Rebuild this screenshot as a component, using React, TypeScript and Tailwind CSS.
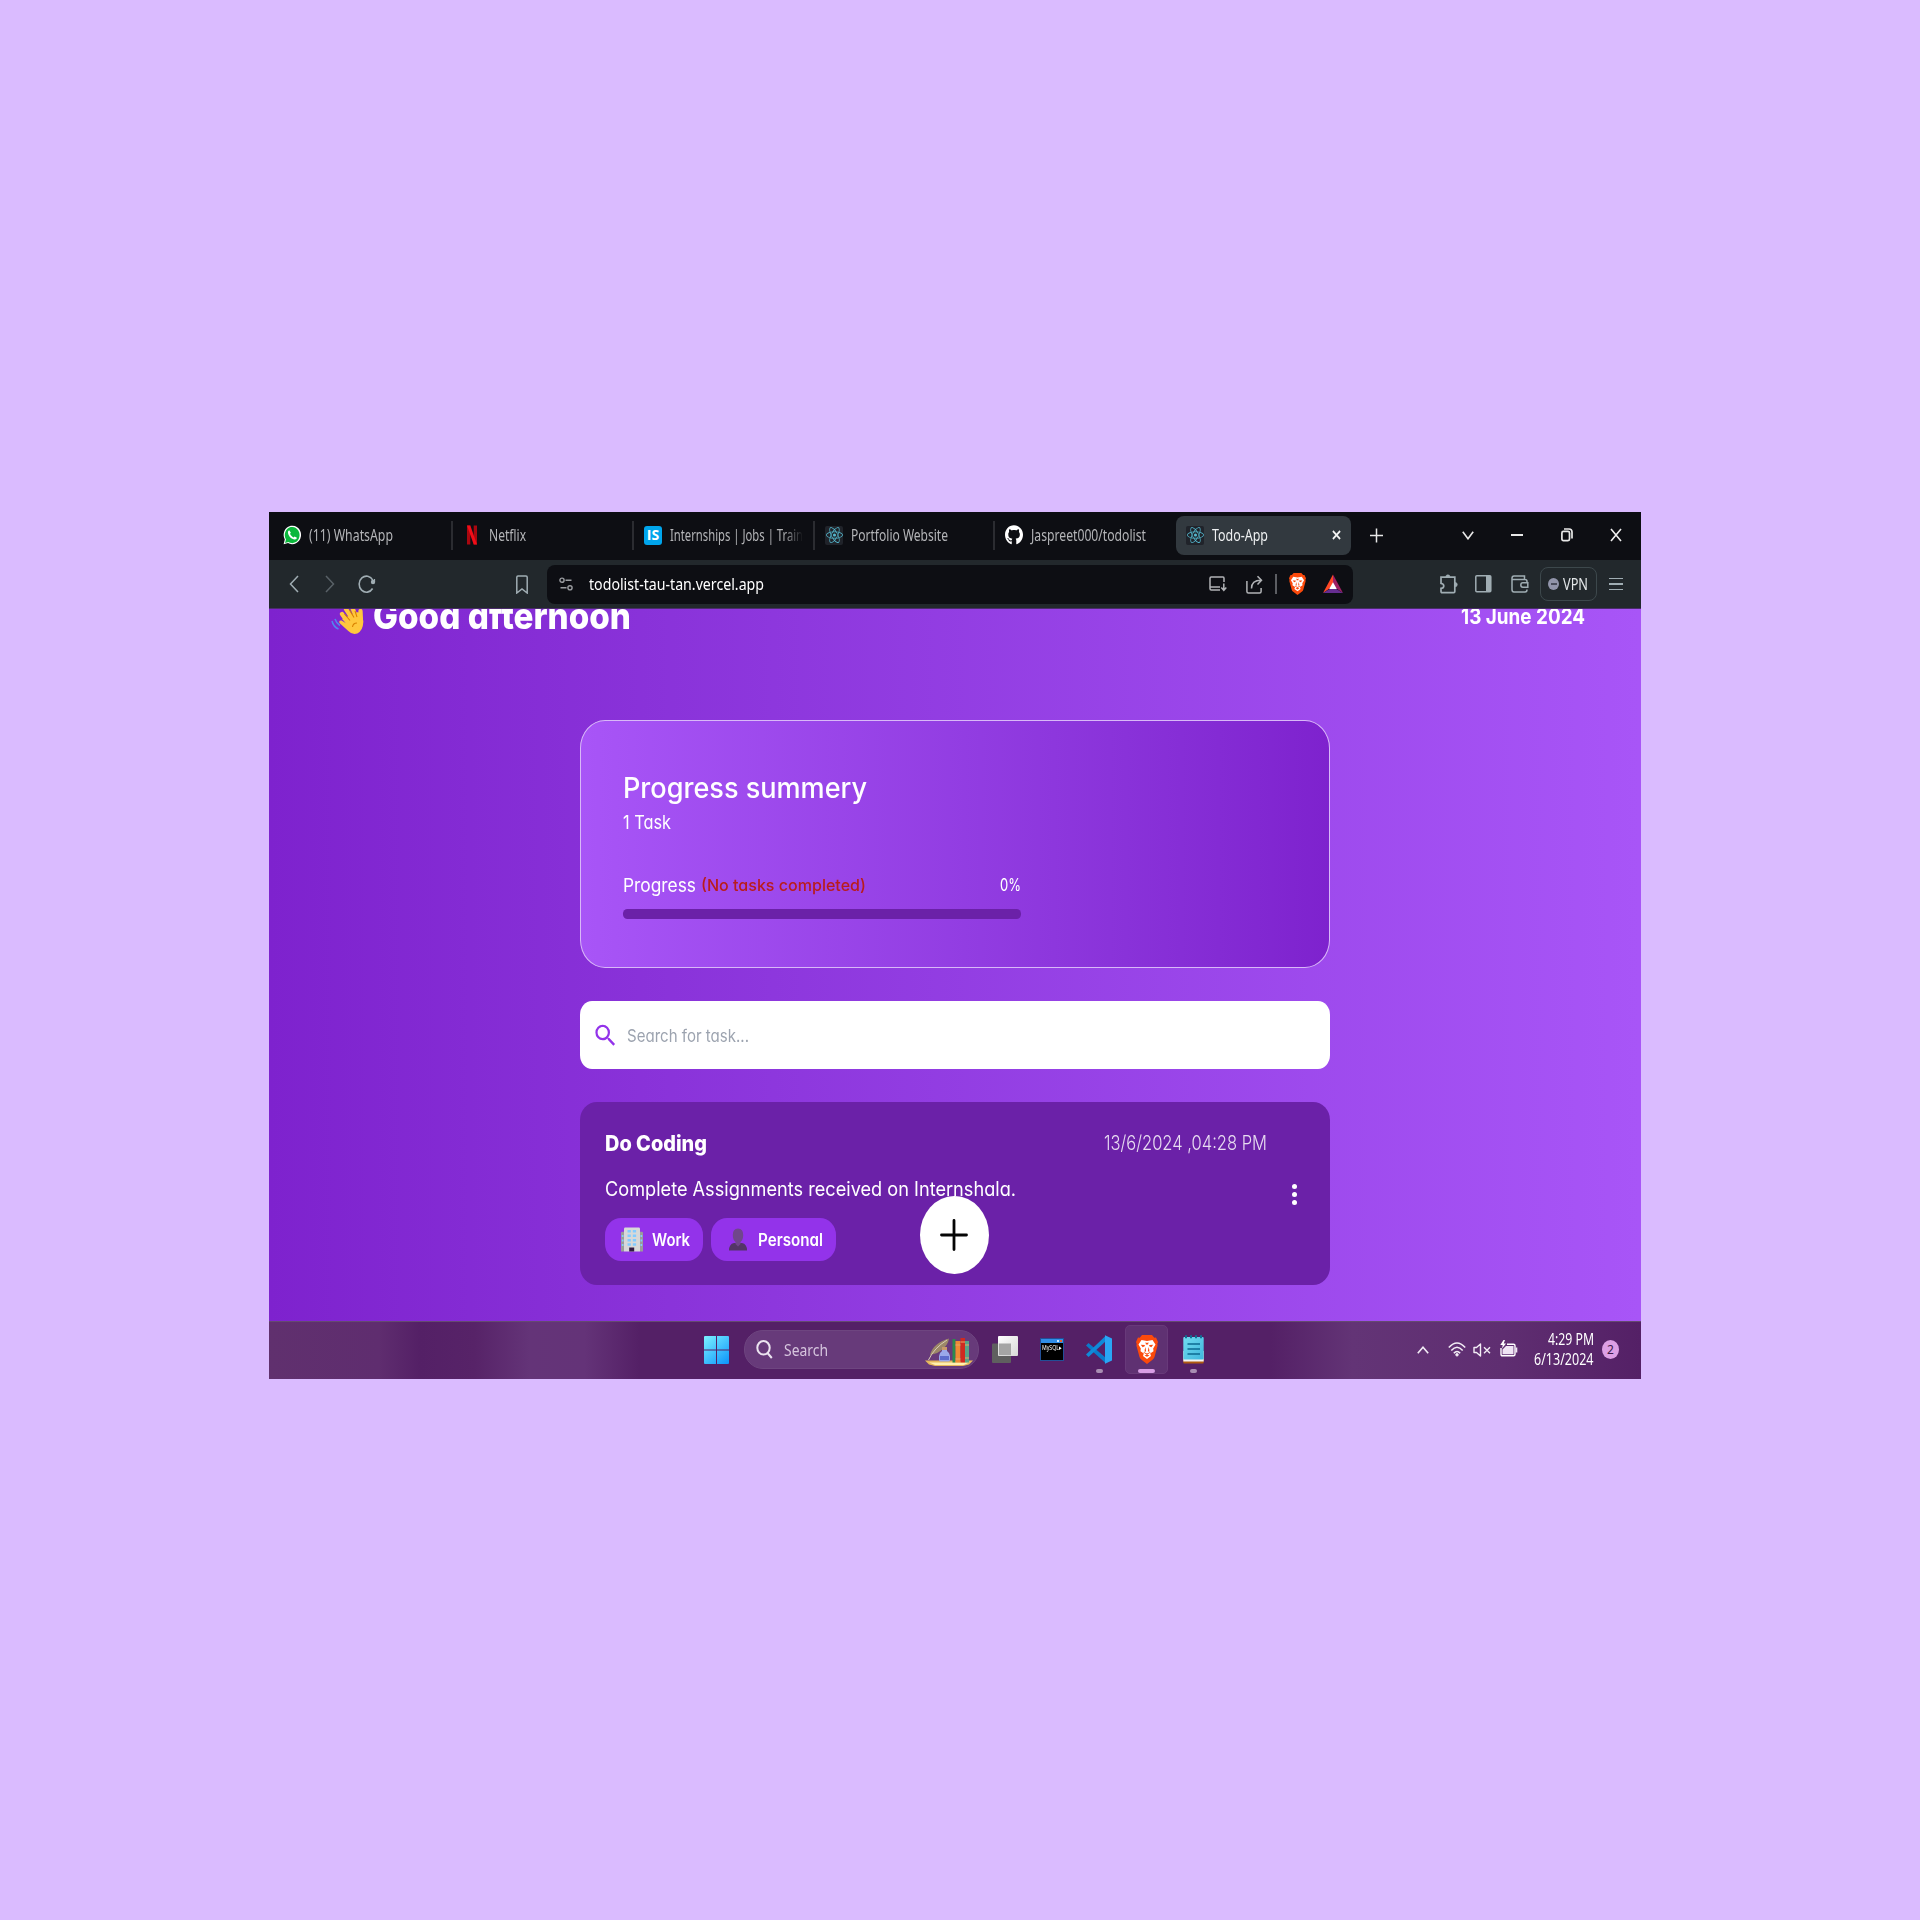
import { useLayoutEffect, useRef, type ReactNode } from "react";
import { FaReact, FaGithub } from "react-icons/fa";
import { MdSearch } from "react-icons/md";

/* Single-line label whose glyphs are condensed or widened to fill its box. */
function Label({ className, children }: { className: string; children: ReactNode }) {
  const box = useRef<HTMLDivElement>(null);
  const text = useRef<HTMLSpanElement>(null);
  useLayoutEffect(() => {
    const b = box.current;
    const t = text.current;
    if (!b || !t) return;
    t.style.transform = "none";
    const natural = t.getBoundingClientRect().width;
    const target = b.getBoundingClientRect().width;
    if (natural > 0) t.style.transform = `scaleX(${target / natural})`;
  });
  return (
    <div ref={box} className={"shrink-0 whitespace-nowrap " + className}>
      <span ref={text} className="inline-block origin-left">
        {children}
      </span>
    </div>
  );
}

function ReactBadge() {
  return (
    <div className="flex h-[19px] w-[18px] items-center justify-center rounded-[2px] bg-[#20232a]">
      <FaReact className="h-[18px] w-[17px] text-[#53b6cc]" preserveAspectRatio="none" />
    </div>
  );
}

function WhatsAppIcon() {
  return (
    <svg viewBox="0 0 18 20" className="h-[20px] w-[18px]">
      <path d="M.6 19.3 1.800 14.6A8.700 9.3 0 1 1 5 18z" fill="#fff" />
      <path d="M2 18 3 14.5A7.400 8.1 0 1 1 5.4 17z" fill="#0bb83c" />
      <path
        d="M6.2 5.3c-.9.4-1.4 1.4-1.2 2.6.5 3.2 3.6 6.300 6.700 6.500 1.200.1 2-.6 2.200-1.700l-2.300-1.300-1 1.100C9 11.800 7.500 10.200 7 8.800l.9-1.100z"
        fill="#fff"
      />
    </svg>
  );
}

function NetflixIcon() {
  return (
    <svg viewBox="0 0 18 20" className="h-[20px] w-[18px]">
      <path d="M4 .5h3.300v19H4zM10.700.5H14v19h-3.300z" fill="#a9070f" />
      <path d="M4 .5h3.300L14 19.500h-3.300z" fill="#f20d18" />
    </svg>
  );
}

function BraveIcon({ className }: { className: string }) {
  return (
    <svg viewBox="0 0 22 29" preserveAspectRatio="none" className={"shrink-0 " + className}>
      <path
        d="M6 0h10l2.300 2.700 1.700-.2 2 4.500-.7 2 .3 1.500-3.100 11.500q-.6 1.800-2 2.800L11 29l-5.500-4.200q-1.400-1-2-2.800L.4 10.500.7 9 0 7l2-4.500 1.700.2z"
        fill="#fb4a0c"
      />
      <path
        d="M5.500 5 11 6l5.500-1 3 4.500-2.300 4 .3 2.700-3.300 2.300.8 2.500L11 24l-4-3 .8-2.500-3.300-2.300.3-2.700-2.300-4z"
        fill="#fff"
      />
      <path
        d="m4.800 9.800 3.700.2.500 1-2.300 1.200zM17.200 9.800l-3.700.2-.5 1 2.300 1.200zM9.500 7.200 11 8l1.500-.8-.4 2.300H9.900zM9.500 12l.6 4.200-2 1 2.900 1.300 2.900-1.300-2-1 .6-4.200.9 3-.3 1.500 1.500.9L11 19.800l-3.600-2.400 1.500-.9-.3-1.500zM8.500 20.500 11 19.500l2.500 1-2.500 1.300z"
        fill="#fb4a0c"
      />
    </svg>
  );
}

function Tab({ tab, icon, sep = true, children }: { tab: string; icon: ReactNode; sep?: boolean; children: ReactNode }) {
  return (
    <div className={"flex h-full shrink-0 items-center overflow-hidden " + tab}>
      {sep && <div className="mr-[10.5px] h-[29px] w-[1.5px] shrink-0 bg-[#2b2c31]" />}
      <div className="shrink-0">{icon}</div>
      {children}
    </div>
  );
}

function TabStrip() {
  return (
    <div className="flex h-[48px] items-center bg-[#0d0e13] pb-[2px] font-['Noto_Sans'] text-[15.5px] leading-[20px] text-[#b4b5b8]">
      <Tab tab="w-[182px] pl-[14px]" sep={false} icon={<WhatsAppIcon />}>
        <Label className="ml-[8px] w-[84px]">(11) WhatsApp</Label>
      </Tab>
      <Tab tab="w-[181px]" icon={<NetflixIcon />}>
        <Label className="ml-[8px] w-[37px]">Netflix</Label>
      </Tab>
      <Tab
        tab="w-[181px]"
        icon={
          <div className="flex h-[19px] w-[18px] items-center justify-center rounded-[3px] bg-[#00a5ec] font-['Open_Sans'] text-[14px] leading-none font-bold text-white">
            IS
          </div>
        }
      >
        <div className="ml-[8px] w-[133px] overflow-hidden [mask-image:linear-gradient(to_right,black_85%,transparent)]">
          <Label className="w-[136px]">Internships | Jobs | Traini</Label>
        </div>
      </Tab>
      <Tab tab="w-[180px]" icon={<ReactBadge />}>
        <Label className="ml-[8px] w-[97px]">Portfolio Website</Label>
      </Tab>
      <Tab tab="w-[183px]" icon={<FaGithub className="h-[20px] w-[18px] text-white" preserveAspectRatio="none" />}>
        <Label className="ml-[8px] w-[115px]">Jaspreet000/todolist</Label>
      </Tab>
      <div className="flex h-[39px] w-[175px] shrink-0 items-center rounded-[8px] bg-[#32393f] pl-[10px] text-[#eef0f1]">
        <ReactBadge />
        <Label className="ml-[8px] w-[56px]">Todo-App</Label>
        <svg viewBox="0 0 10 10" className="ml-[64px] h-[10px] w-[9px]" preserveAspectRatio="none">
          <path d="M1 1 9 9M9 1 1 9" stroke="#f4f4f4" strokeWidth="1.800" />
        </svg>
      </div>
      <svg viewBox="0 0 13 15" className="ml-[18.500px] h-[15px] w-[13px] shrink-0">
        <path d="M6.500.5v14M0 7.500h13" stroke="#e8e8e8" strokeWidth="1.500" />
      </svg>
      <svg viewBox="0 0 12 9" className="ml-[79.500px] h-[9px] w-[12px] shrink-0">
        <path d="M.8.8 6 7.800 11.200.8" fill="none" stroke="#e8e8e8" strokeWidth="1.600" />
      </svg>
      <div className="ml-[37px] h-[2px] w-[12px] shrink-0 bg-[#e8e8e8]" />
      <svg viewBox="0 0 12 14" className="ml-[37.500px] h-[14px] w-[12px] shrink-0" fill="none" stroke="#e8e8e8" strokeWidth="1.700">
        <rect x=".9" y="3.400" width="7.600" height="9.200" rx="1.500" />
        <path d="M3 1h5a3 3 0 0 1 3 3v6.500" />
      </svg>
      <svg viewBox="0 0 12 14" className="ml-[37.500px] h-[14px] w-[12px] shrink-0">
        <path d="M1 1 11 13M11 1 1 13" stroke="#f0f0f0" strokeWidth="1.600" />
      </svg>
    </div>
  );
}

function Toolbar() {
  return (
    <div className="flex h-[49px] items-center border-b border-[#4b2c6b] bg-[#22282c] font-['Noto_Sans'] text-[#a0adb3]">
      <svg viewBox="0 0 10 18" className="ml-[20px] h-[18px] w-[10px]" fill="none" stroke="#a0adb3" strokeWidth="1.500">
        <path d="M9 1 1.500 9 9 17" />
      </svg>
      <svg viewBox="0 0 10 18" className="ml-[26px] h-[18px] w-[10px]" fill="none" stroke="#596167" strokeWidth="1.500">
        <path d="M1 1 8.500 9 1 17" />
      </svg>
      <svg viewBox="0 0 18 20" className="ml-[23px] h-[20px] w-[18px]">
        <path d="M14.600 14.500A7.300 8 0 1 1 14.800 6.200" fill="none" stroke="#a0adb3" strokeWidth="1.600" />
        <circle cx="15" cy="8" r="2.200" fill="#a0adb3" />
        <path d="M16.500 5v3" stroke="#a0adb3" strokeWidth="1.200" />
      </svg>
      <svg viewBox="0 0 12 19" className="ml-[140px] h-[19px] w-[12px]" fill="none" stroke="#a0adb3" strokeWidth="1.500">
        <path d="M.8 2.200Q.8 1 2 1h8q1.200 0 1.200 1.200V18L6 14 .8 18z" />
      </svg>
      <div className="ml-[19px] flex h-[39px] w-[806px] shrink-0 items-center rounded-[8px] bg-[#0d0e13]">
        <svg viewBox="0 0 14 14" className="ml-[12px] h-[14px] w-[14px]" fill="none" stroke="#9b9da1" strokeWidth="1.400">
          <circle cx="3" cy="3.200" r="2.100" />
          <circle cx="11" cy="10.800" r="2.100" />
          <path d="M6.500 3.200h6M1.500 10.800h6" />
        </svg>
        <Label className="ml-[16px] w-[175px] text-[16.5px] leading-[22px] text-white">todolist-tau-tan.vercel.app</Label>
        <svg viewBox="0 0 18 16" className="ml-[445px] h-[16px] w-[18px]" fill="none" stroke="#b1b3b6" strokeWidth="1.500">
          <path d="M15 6V2.200Q15 1 14 1H2.200Q1 1 1 2.200v10.600Q1 14 2.200 14H11M1 11h10" />
          <path d="M14.800 7.500v6.500M12.300 11.500l2.500 2.800 2.500-2.800" />
        </svg>
        <svg viewBox="0 0 17 19" className="ml-[19px] h-[19px] w-[17px]" fill="none" stroke="#b1b3b6" strokeWidth="1.500">
          <path d="M.9 6v10.500Q.9 18 2.400 18h11.200q1.500 0 1.500-1.500V13" />
          <path d="M5.500 13.500C5.500 8 8.500 5.300 15 5.300M11.500 1.200l4 4.100-4 4.200" />
        </svg>
        <div className="ml-[12px] h-[20px] w-[1.5px] bg-[#5c5e63]" />
        <BraveIcon className="ml-[12px] h-[22px] w-[17px]" />
        <svg viewBox="0 0 20 20" className="ml-[17.5px] h-[20px] w-[20px]">
          <path d="M10 .5 0 19l10-7z" fill="#ff4724" />
          <path d="M10 .5 20 19l-10-7z" fill="#9e1f63" />
          <path d="M0 19h20l-10-6z" fill="#662d91" />
          <path d="M10 8.300 6.200 15h7.600z" fill="#fff" />
        </svg>
      </div>
      <svg viewBox="0 0 18 20" className="ml-[87px] h-[20px] w-[18px]" fill="none" stroke="#a0adb3" strokeWidth="1.700">
        <path d="M1 3.200h13.800v14.400q0 1-1 1H2q-1 0-1-1v-3.300q2.800 0 2.800-2.300T1 9.300z" />
        <path d="M5.800 3Q5.800.8 7.900.8T10 3zM15 8.400q2.300 0 2.300 2.200T15 12.800z" fill="#a0adb3" strokeWidth="0.600" />
      </svg>
      <svg viewBox="0 0 17 18" className="ml-[17px] h-[18px] w-[17px]">
        <rect x=".8" y=".8" width="15" height="16" rx="1" fill="none" stroke="#a0adb3" strokeWidth="1.500" />
        <path d="M11 1h5v16h-5z" fill="#a0adb3" />
      </svg>
      <svg viewBox="0 0 18 18" className="ml-[18.500px] h-[18px] w-[18px]" fill="none" stroke="#a0adb3" strokeWidth="1.500">
        <path d="M1 3v11.500Q1 17 3 17h11q2 0 2-2.500M1 3.300Q1 1 3 1h10.500v3.500M1 4.500h13q2 0 2 2V8" />
        <path d="M16.800 7.800h-5q-2 0-2 2.200t2 2.200h5z" />
      </svg>
      <div className="ml-[11.500px] flex h-[34px] w-[57px] shrink-0 items-center rounded-[8px] border border-[#3d484c]">
        <div className="ml-[7px] flex h-[12px] w-[11px] items-center justify-center rounded-[50%] bg-[#9295ab]">
          <div className="h-[1.5px] w-[6px] bg-[#4a4d5c]" />
        </div>
        <Label className="ml-[4px] w-[25px] text-[15.5px] leading-[20px] text-[#e3e6e8]">VPN</Label>
      </div>
      <div className="ml-[12px] flex w-[14px] flex-col gap-[4px]">
        <div className="h-[1.5px] bg-[#a0adb3]" />
        <div className="h-[1.5px] bg-[#a0adb3]" />
        <div className="h-[1.5px] bg-[#a0adb3]" />
      </div>
    </div>
  );
}

function WaveHand() {
  return (
    <svg viewBox="0 0 34 36" className="h-[36px] w-[34px]">
      <path d="M1 22q1.500 6 6.500 8M4 20q1.500 4.500 5 6.500" stroke="#5087f0" strokeWidth="1.500" fill="none" />
      <g stroke="#ffc83d" strokeWidth="4.300" strokeLinecap="round">
        <path d="m11 15 7 10M15 10l7 11M21 8l5 12M29.500 12l.5 11" />
      </g>
      <path d="M11 20 27 13q5 3 5.300 10-.3 8.500-6 11.500-5.300 1.500-9-2.500L8.500 24q-1-3 2-2.500l5 3z" fill="#ffc83d" />
      <path d="m13.500 15 5.500 6.500M18.500 11l4.500 7.500M24 12l2 6M26 24q-4 0-4.500 4" stroke="#d98200" strokeWidth="1.100" fill="none" />
    </svg>
  );
}

function ProgressCard() {
  return (
    <div className="h-[248px] w-[750px] rounded-[25px/28px] border border-[#d9b8f8] bg-linear-to-r from-[#a855f7] to-[#7e22ce] pl-[42.5px] text-white">
      <Label className="mt-[48px] w-[244px] text-[28px] leading-[38px] font-medium">Progress summery</Label>
      <Label className="mt-[2px] w-[48px] text-[19px] leading-[28px]">1 Task</Label>
      <div className="mt-[35px] flex w-[398px] items-center">
        <Label className="w-[73px] text-[18.5px] leading-[26px]">Progress</Label>
        <Label className="ml-[5px] w-[165px] text-[16.5px] leading-[26px] font-medium text-[#b91c1c]">(No tasks completed)</Label>
        <Label className="ml-auto w-[21px] text-[17px] leading-[26px]">0%</Label>
      </div>
      <div className="mt-[11px] h-[10px] w-[398px] rounded-[4.5px] bg-[#6b21a8]" />
    </div>
  );
}

function SearchBar() {
  return (
    <div className="mt-[33px] flex h-[68px] w-[750px] items-center rounded-[12px/14px] bg-white">
      <MdSearch className="ml-[12.5px] h-[29px] w-[27px] text-[#9333ea]" preserveAspectRatio="none" />
      <Label className="mt-[2px] ml-[7.5px] w-[122px] text-[17px] leading-[24px] text-[#9ca3af]">Search for task...</Label>
    </div>
  );
}

function OfficeIcon() {
  return (
    <svg viewBox="0 0 22 25" className="h-[25px] w-[22px]">
      <path d="M0 6q0-1.200 1.200-1.200H3V24.500H0zM22 6q0-1.200-1.200-1.200H19V24.500h3z" fill="#9b9b9b" />
      <path d="M3 1.700Q3 .5 4.200.5h13.600Q19 .5 19 1.700v22.800H3z" fill="#d8d8d8" />
      <path
        d="M6.500 3h3.300v2.500H6.500zM11.800 3h3.300v2.500h-3.300zM6.500 7.500h3.300V10H6.500zM11.800 7.500h3.300V10h-3.300zM6.500 12h3.300v2.500H6.500zM11.800 12h3.300v2.500h-3.300zM6.500 16.300h3.300v2.500H6.500zM11.800 16.300h3.300v2.500h-3.300zM.8 8h1.700v2H.8zM.8 12.500h1.700v2H.8zM.8 17h1.700v2H.8zM19.500 8h1.700v2h-1.700zM19.500 12.500h1.700v2h-1.700zM19.500 17h1.700v2h-1.700z"
        fill="#83cbff"
      />
      <path d="M8.200 20.500h5v4h-5z" fill="#321b41" />
    </svg>
  );
}

function PersonIcon() {
  return (
    <svg viewBox="0 0 18 23" className="h-[23px] w-[18px]">
      <path d="M0 22.500Q0 16 5 15h8q5 1 5 7.500z" fill="#533566" />
      <path d="M9 .5q5.200 0 5.200 6.500 0 5-2.700 7v2L9 18.500 6.500 16v-2Q3.800 12 3.800 7 3.800.5 9 .5z" fill="#70468c" />
    </svg>
  );
}

function TaskCard() {
  return (
    <div className="relative mt-[33px] flex h-[183px] w-[750px] rounded-[17px/18px] bg-[#6b21a8] pl-[25.5px] text-white">
      <div className="w-[662px]">
        <div className="mt-[27px] flex h-[28px] items-center justify-between">
          <Label className="w-[102px] text-[21.5px] leading-[28px] font-extrabold">Do Coding</Label>
          <Label className="w-[163px] text-[20px] leading-[28px] font-light text-[#e8dcf1]">13/6/2024 ,04:28 PM</Label>
        </div>
        <Label className="mt-[18px] w-[411px] text-[19.5px] leading-[28px]">Complete Assignments received on Internshala.</Label>
        <div className="mt-[15px] flex gap-[8px] text-[17px] leading-[24px] font-semibold">
          <div className="flex h-[43px] w-[98px] items-center rounded-[16px/17px] bg-[#9333ea] pl-[16px]">
            <OfficeIcon />
            <Label className="ml-[8.5px] w-[38px]">Work</Label>
          </div>
          <div className="flex h-[43px] w-[125px] items-center rounded-[16px/17px] bg-[#9333ea] pl-[18px]">
            <PersonIcon />
            <Label className="ml-[11px] w-[65px]">Personal</Label>
          </div>
        </div>
      </div>
      <div className="mt-[82px] ml-[24.5px] flex flex-col gap-[3px]">
        <div className="size-[5px] rounded-full bg-white" />
        <div className="size-[5px] rounded-full bg-white" />
        <div className="size-[5px] rounded-full bg-white" />
      </div>
      <div className="absolute top-[94px] left-[340.5px] flex h-[78px] w-[68.5px] items-center justify-center rounded-[50%] bg-white">
        <svg viewBox="0 0 28 32" className="h-[32px] w-[28px]">
          <path d="M14 1.500v29M1.500 16h25" stroke="#050505" strokeWidth="2.800" strokeLinecap="round" />
        </svg>
      </div>
    </div>
  );
}

function TodoPage() {
  return (
    <div className="h-[712px] overflow-hidden bg-linear-to-r from-[#7e22ce] to-[#a855f7] font-['Inter'] [font-feature-settings:'cv11']">
      <div className="flex h-[111px] items-start justify-between pr-[56px] pl-[62px] text-white">
        <div className="flex">
          <div className="-mt-[10px]">
            <WaveHand />
          </div>
          <Label className="-mt-[19px] ml-[8px] w-[258px] text-[37px] leading-[51px] font-extrabold">Good afternoon</Label>
        </div>
        <Label className="-mt-[8px] w-[124px] text-[22px] leading-[30px] font-bold">13 June 2024</Label>
      </div>
      <div className="flex flex-col items-center pr-[1px]">
        <ProgressCard />
        <SearchBar />
        <TaskCard />
      </div>
    </div>
  );
}

function SearchArt() {
  return (
    <svg viewBox="0 0 48 29" className="h-[29px] w-[48px]">
      <path d="M0 23.500h48l-4 4-6 1.500H10l-6-1.500z" fill="#e5b85c" />
      <path d="M4 25.500h40l-5 2.500H10z" fill="#fff0b0" />
      <path d="M5 18Q8 6 24 1.500q-1 7-8 12Q12 17 7 17.500z" fill="#9c8768" />
      <path d="M3.500 23Q9 11 22 3" stroke="#d9cdb4" strokeWidth="1" fill="none" />
      <path d="M17 10h5v4q3 2 3 5v4q0 1.500-1.500 1.500h-8Q14 24.500 14 23v-4q0-3 3-5z" fill="#9aa8ea" />
      <path d="M15 19h9v4h-9z" fill="#5d6ccd" />
      <path d="M17 10h5v3h-5z" fill="#c9996a" />
      <path d="M27.500 2h3v23.500h-3z" fill="#2c8a4d" />
      <path d="M30.500 4h5v21.500h-5z" fill="#f08b34" />
      <path d="M35.500 1h4.500v24.500h-4.500z" fill="#cf2a20" />
      <path d="M40 4h4v21.500h-4z" fill="#57a387" />
      <path d="M30.500 8h5M35.500 5h4.500M30.500 22h5M40 8h4M40 21h4" stroke="#e8a86a" strokeWidth="1" />
    </svg>
  );
}

function Taskbar() {
  return (
    <div className="flex h-[58px] items-center border-t-[1.5px] border-[#664a70] bg-[linear-gradient(to_right,#60306e_0%,#5f2d6f_8%,#542066_11%,#572368_15%,#643478_19%,#643378_23%,#542066_27%,#542066_73%,#633476_79%,#5f2e71_90%,#542066_100%)] pb-[2px] font-['Noto_Sans'] text-white">
      <svg viewBox="0 0 25 28" className="ml-[435px] h-[28px] w-[25px] shrink-0">
        <defs>
          <linearGradient id="win" x1="0" y1="0" x2="25" y2="28" gradientUnits="userSpaceOnUse">
            <stop stopColor="#7cf2ff" />
            <stop offset="1" stopColor="#0b93fb" />
          </linearGradient>
        </defs>
        <path d="M0 1Q0 0 1 0h11v13.500H0zM13 0h11q1 0 1 1v12.500H13zM0 14.500h12V28H1q-1 0-1-1zM13 14.500h12V27q0 1-1 1H13z" fill="url(#win)" />
      </svg>
      <div className="ml-[15px] flex h-[39px] w-[235px] shrink-0 items-center rounded-[19px] border border-[#6e4580] bg-[#673a7a]">
        <svg viewBox="0 0 17 19" className="ml-[11px] h-[19px] w-[17px]" fill="none" stroke="#ece4f0" strokeWidth="2">
          <ellipse cx="7.500" cy="7.800" rx="6.200" ry="6.800" />
          <path d="m11.500 13 4.300 5" />
        </svg>
        <Label className="ml-[11px] w-[44px] text-[16px] leading-[22px] text-[#d6c5de]">Search</Label>
        <div className="mt-[3px] ml-[97px]">
          <SearchArt />
        </div>
      </div>
      <svg viewBox="0 0 26 27" className="mt-[-1px] ml-[13px] h-[27px] w-[26px] shrink-0">
        <defs>
          <linearGradient id="pane" x1="0" y1="0" x2="1" y2="1">
            <stop stopColor="#fff" />
            <stop offset="1" stopColor="#d8d8d8" />
          </linearGradient>
        </defs>
        <rect x="0" y="7.500" width="19" height="19.500" rx="1" fill="#5f5f5f" />
        <rect x="6" y="0" width="20" height="20" rx="1" fill="url(#pane)" />
        <path d="M6.800 7.500H19v11.700H6.800z" fill="#a5a5a5" />
      </svg>
      <div className="ml-[22px] flex h-[23px] w-[24px] shrink-0 flex-col border border-[#224f96] bg-black">
        <div className="flex h-[4px] shrink-0 items-center justify-end gap-[1px] bg-[#2f8ee8] pr-[1px]">
          <div className="size-[2px] bg-[#cde6ff]" />
          <div className="size-[2px] bg-[#e8622c]" />
        </div>
        <Label className="mt-[1px] ml-[1px] w-[20px] text-[7px] leading-[8px]">MySQL▸</Label>
      </div>
      <div className="mt-[9px] ml-[22px] flex w-[26px] shrink-0 flex-col items-center">
        <svg viewBox="0 0 26 29" className="h-[29px] w-[26px]">
          <path d="M0 10.500 2.500 8 20 23v5.500z" fill="#0a7acb" />
          <path d="M0 19.500 2.500 22 20 6V.5z" fill="#0f8ad8" />
          <path d="M19 .3 26 3.500v22L19 28.800z" fill="#2aa5f4" />
        </svg>
        <div className="mt-[5px] h-[4px] w-[7px] rounded-full bg-[#a88db3]" />
      </div>
      <div className="ml-[13px] flex h-[49px] w-[43px] shrink-0 flex-col items-center rounded-[5px] border border-[#68397a] bg-[#5f3172]">
        <BraveIcon className="mt-[9px] h-[29px] w-[22px]" />
        <div className="mt-[5px] h-[4px] w-[17px] shrink-0 rounded-full bg-[#d99ee6]" />
      </div>
      <div className="mt-[9px] ml-[15px] flex w-[21px] shrink-0 flex-col items-center">
        <svg viewBox="0 0 21 29" className="h-[29px] w-[21px]">
          <defs>
            <linearGradient id="note" x1="0" y1="0" x2="1" y2="1">
              <stop stopColor="#72dcf0" />
              <stop offset="1" stopColor="#3fb5dc" />
            </linearGradient>
          </defs>
          <rect x=".3" y="16" width="20.400" height="12.500" rx="1" fill="#b05a10" />
          <rect x=".3" y="16" width="20.400" height="10.500" fill="#f4f4f4" />
          <rect x=".3" y="2" width="20.400" height="22.500" rx="1" fill="url(#note)" />
          <path d="M4.500 9h12.500M4.500 14h12.500M4.500 19h12.500" stroke="#0d6a91" strokeWidth="1.700" />
          <path d="M3 .3v3M8 .3v3M13 .3v3M18 .3v3" stroke="#0f6f95" strokeWidth="2" />
        </svg>
        <div className="mt-[5px] h-[4px] w-[7px] rounded-full bg-[#a88db3]" />
      </div>
      <svg viewBox="0 0 12 8" className="ml-[213px] h-[8px] w-[12px] shrink-0">
        <path d="M.8 7.200 6 1.200l5.200 6" fill="none" stroke="#f2ecf5" strokeWidth="1.600" />
      </svg>
      <svg viewBox="0 0 18 15" className="ml-[19px] h-[15px] w-[18px] shrink-0" fill="none" stroke="#f2ecf5" strokeWidth="1.500">
        <path d="M.8 5.500Q9-3.500 17.200 5.500M3.300 8.500Q9 2 14.700 8.500M5.800 11.300Q9 7.500 12.200 11.300" />
        <circle cx="9" cy="12.800" r="1.300" fill="#f2ecf5" strokeWidth="0.800" />
      </svg>
      <svg viewBox="0 0 18 14" className="ml-[7px] h-[14px] w-[18px] shrink-0" fill="none" stroke="#f2ecf5" strokeWidth="1.400">
        <path d="M1 4.500h2.500L7.500 1v12l-4-3.500H1z" strokeLinejoin="round" />
        <path d="m11 4.200 6 6M17 4.200l-6 6" />
      </svg>
      <svg viewBox="0 0 18 17" className="mt-[-2px] ml-[9px] h-[17px] w-[18px] shrink-0">
        <path d="M7 4.300h6.500q1.500 0 1.500 1.500v8.500q0 1.500-1.500 1.500h-11q-1.500 0-1.500-1.500V8" fill="none" stroke="#fff" strokeWidth="1.400" />
        <path d="M6 6h7.500v8.300h-11V9.500zM15.500 7.500h1.800v5h-1.800z" fill="#efe4f4" />
        <path d="M3.500 0 .3 5h2.400L2 8.500 6 3.500H3.700L5 0z" fill="#fff" />
      </svg>
      <div className="ml-[15.5px] flex w-[60px] shrink-0 flex-col items-end text-[15.5px] leading-[19.5px]">
        <Label className="w-[46px]">4:29 PM</Label>
        <Label className="w-[59.5px]">6/13/2024</Label>
      </div>
      <div className="ml-[8.5px] flex h-[19px] w-[17px] shrink-0 items-center justify-center rounded-[50%] bg-[#dd9fe5] text-[12px] leading-none text-[#3d1a4a]">
        2
      </div>
    </div>
  );
}

export default function App() {
  return (
    <div className="h-[1920px] w-[1920px] overflow-hidden bg-[#dabbff] pt-[512px] pl-[269px]">
      <div className="h-[867px] w-[1372px] overflow-hidden">
        <TabStrip />
        <Toolbar />
        <TodoPage />
        <Taskbar />
      </div>
    </div>
  );
}
